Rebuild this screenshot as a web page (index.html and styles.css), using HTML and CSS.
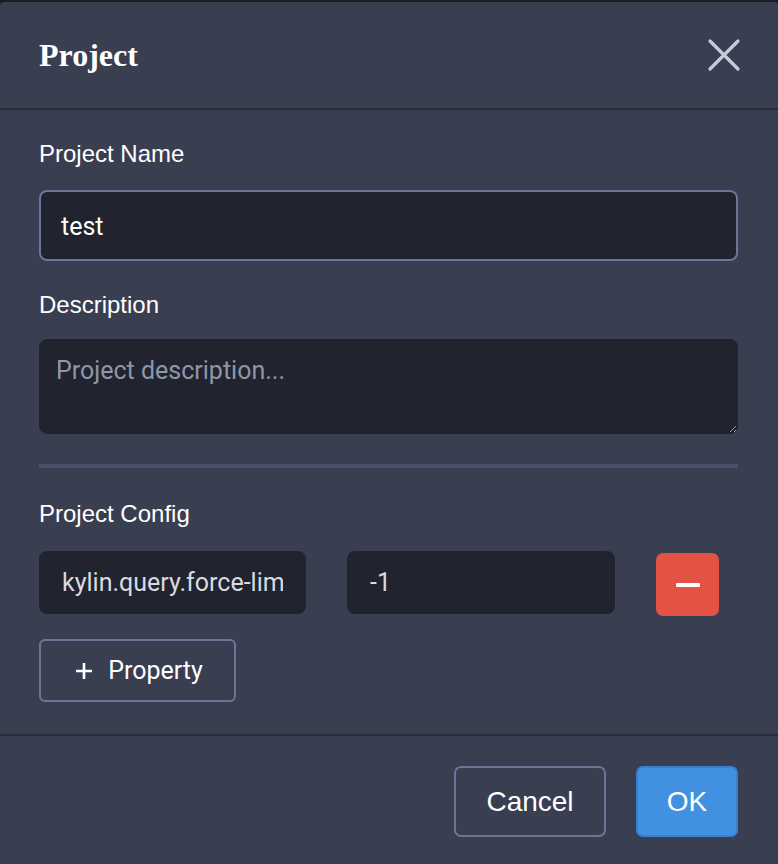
FILE: index.html
```html
<!DOCTYPE html>
<html lang="en">
<head>
<meta charset="utf-8">
<title>Project</title>
<link rel="stylesheet" href="styles.css">
</head>
<body>
<div class="modal">
  <header class="modal-header">
    <h1 class="modal-title">Project</h1>
    <button class="close-btn" aria-label="Close">
      <svg width="34" height="34" viewBox="0 0 34 34"><path d="M3 3 L31 31 M31 3 L3 31" stroke="#c6ccd7" stroke-width="3.2" stroke-linecap="round" fill="none"/></svg>
    </button>
  </header>
  <section class="modal-body">
    <div class="field">
      <label class="label">Project Name</label>
      <input class="input input-name" type="text" value="test">
    </div>
    <div class="field">
      <label class="label">Description</label>
      <textarea class="textarea" placeholder="Project description..."></textarea>
    </div>
    <div class="separator"></div>
    <div class="field config">
      <label class="label">Project Config</label>
      <div class="config-row">
        <input class="input config-input" type="text" value="kylin.query.force-limit">
        <input class="input config-input" type="text" value="-1">
        <button class="remove-btn" aria-label="Remove"><span class="minus"></span></button>
      </div>
      <button class="add-btn">
        <svg width="18" height="18" viewBox="0 0 18 18"><path d="M9 1 V17 M1 9 H17" stroke="#fff" stroke-width="2.6" fill="none"/></svg>
        <span>Property</span>
      </button>
    </div>
  </section>
  <footer class="modal-footer">
    <button class="btn btn-cancel">Cancel</button>
    <button class="btn btn-ok">OK</button>
  </footer>
</div>
</body>
</html>
```
FILE: styles.css
```css
html, body {
  margin: 0;
  padding: 0;
  background: #1b1d23;
}
body {
  padding-top: 2px;
  height: 862px;
  overflow: hidden;
}
.modal {
  background: #3a3e51;
  height: 862px;
  border-radius: 4px 4px 0 0;
  display: flex;
  flex-direction: column;
}
.modal-header {
  height: 108px;
  box-sizing: border-box;
  border-bottom: 2px solid #2a2c37;
  padding: 0 37px 0 39px;
  display: flex;
  align-items: center;
  justify-content: space-between;
}
.modal-title {
  margin: 0;
  font-family: "Liberation Serif", serif;
  font-weight: bold;
  font-size: 32px;
  color: #ffffff;
  line-height: 1;
}
.close-btn {
  background: none;
  border: none;
  padding: 0;
  width: 34px;
  height: 34px;
  display: flex;
  cursor: pointer;
}
.modal-body {
  padding: 30px 40px 32px 39px;
  border-bottom: 2px solid #2a2c37;
}
.field {
  display: flex;
  flex-direction: column;
  margin-bottom: 30px;
}
.label {
  font-family: "Liberation Sans", Arial, sans-serif;
  font-size: 24px;
  line-height: 28px;
  color: #ffffff;
  margin-bottom: 22px;
}
.input {
  box-sizing: border-box;
  background: #21232e;
  border: 2px solid #21232e;
  border-radius: 8px;
  font-family: Roboto, sans-serif;
  font-size: 25px;
  color: #ffffff;
  outline: none;
}
.input-name {
  height: 71px;
  border-color: #6f7599;
  padding: 2px 20px 0;
}
.textarea {
  box-sizing: border-box;
  height: 95px;
  background: #21232e;
  border: 1px solid #21232e;
  border-radius: 8px;
  font-family: Roboto, sans-serif;
  font-size: 25px;
  color: #ffffff;
  padding: 16px 16px;
  margin-top: -2px;
  outline: none;
}
.textarea::placeholder {
  color: #8e97a9;
}
.separator {
  height: 4px;
  background: #4b4f6e;
  margin-bottom: 32px;
}
.config {
  margin-bottom: 0;
}
.config .label {
  margin-bottom: 23px;
}
.config-row {
  display: flex;
  align-items: flex-start;
  gap: 41px;
}
.config-input {
  width: 267px;
  height: 63px;
  padding: 0 21px;
  color: #d9dbe1;
}
.config-input + .config-input {
  width: 268px;
}
.remove-btn {
  margin-top: 2px;
  width: 63px;
  height: 63px;
  border: none;
  border-radius: 7px;
  background: #e45243;
  display: flex;
  align-items: center;
  justify-content: center;
  padding: 0;
}
.minus {
  width: 24px;
  height: 4px;
  background: #ffffff;
  border-radius: 1px;
}
.add-btn {
  margin-top: 23px;
  align-self: flex-start;
  width: 197px;
  height: 63px;
  box-sizing: border-box;
  background: transparent;
  border: 2px solid #6f7599;
  border-radius: 6px;
  display: flex;
  align-items: center;
  justify-content: center;
  gap: 15px;
  padding: 0 0 0 3px;
  font-family: Roboto, sans-serif;
  font-size: 25px;
  color: #ffffff;
}
.modal-footer {
  display: flex;
  justify-content: flex-end;
  gap: 30px;
  padding: 30px 40px 0 0;
}
.btn {
  height: 71px;
  box-sizing: border-box;
  border-radius: 7px;
  font-family: "Liberation Sans", Arial, sans-serif;
  font-size: 28px;
  color: #ffffff;
  padding: 0;
}
.btn-cancel {
  width: 152px;
  background: transparent;
  border: 2px solid #6f7599;
}
.btn-ok {
  width: 102px;
  background: #4290e2;
  border: 2px solid #3a7fd2;
}
```
